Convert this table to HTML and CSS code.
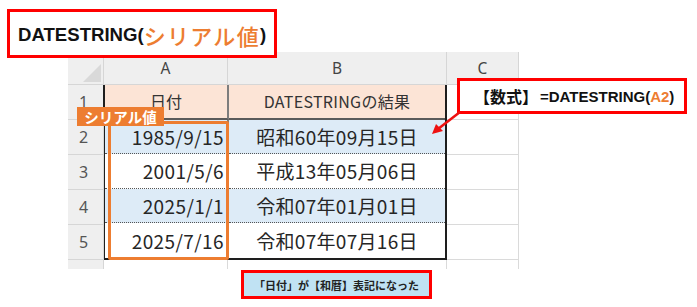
FILE: index.html
```html
<!DOCTYPE html>
<html lang="ja">
<head>
<meta charset="utf-8">
<link rel="stylesheet" href="styles.css">
</head>
<body>
<div class="page">
  <div class="sheet">
    <div class="hdr corner"><svg width="24" height="24" viewBox="0 0 24 24"><polygon points="22,4 22,22 4,22" fill="#d9d9d9"/></svg></div>
    <div class="hdr col">A</div>
    <div class="hdr col">B</div>
    <div class="hdr col">C</div>

    <div class="rh">1</div>
    <div class="table">
      <div class="c a r1">日付</div>
      <div class="c b r1">DATESTRINGの結果</div>
      <div class="c a num blue dot">1985/9/15</div>
      <div class="c b blue dot">昭和60年09月15日</div>
      <div class="c a num dot">2001/5/6</div>
      <div class="c b dot">平成13年05月06日</div>
      <div class="c a num blue dot">2025/1/1</div>
      <div class="c b blue dot">令和07年01月01日</div>
      <div class="c a num">2025/7/16</div>
      <div class="c b">令和07年07月16日</div>
    </div>
    <div class="cc"></div>
    <div class="rh">2</div>
    <div class="cc"></div>
    <div class="rh">3</div>
    <div class="cc"></div>
    <div class="rh">4</div>
    <div class="cc"></div>
    <div class="rh">5</div>
    <div class="cc"></div>

    <div class="rh tail"></div>
    <div class="cc tail"></div>
    <div class="cc tail"></div>
    <div class="cc tail"></div>
  </div>

  <div class="title"><span class="lat">DATESTRING(</span><span class="jp orange">シリアル値</span><span class="lat">)</span></div>
  <div class="serial-box"></div>
  <div class="serial-label">シリアル値</div>
  <div class="formula"><span class="jpf">【数式】</span><span class="latf">=DATESTRING(<span class="orange">A2</span>)</span></div>
  <svg class="arrow" width="697" height="307" viewBox="0 0 697 307">
    <line x1="460" y1="112" x2="438" y2="129" stroke="#ee1111" stroke-width="2.5"/>
    <polygon points="432,134 436,124 443,131" fill="#ee1111"/>
  </svg>
  <div class="note">「日付」が【和暦】表記になった</div>
</div>
</body>
</html>
```

FILE: styles.css
```css
* { box-sizing: border-box; }
html, body { margin: 0; padding: 0; background: #fff; }
.page {
  position: relative;
  width: 697px;
  height: 307px;
  overflow: hidden;
  padding: 52px 0 0 68px;
}
.sheet {
  display: grid;
  grid-template-columns: 36px 124px 219px 72px;
  grid-template-rows: 33px 35px 35px 35px 35px 35px 9px;
  width: 451px;
  font-family: "Noto Sans CJK JP", "Noto Sans", sans-serif;
  color: #222;
}
.hdr {
  background: #efefef;
  border-right: 1px solid #d6d6d6;
  border-bottom: 1px solid #d6d6d6;
  display: flex;
  align-items: center;
  justify-content: center;
  font-family: "Noto Sans", sans-serif;
  font-size: 15.5px;
  color: #444;
}
.corner { align-items: flex-end; justify-content: flex-end; }
.corner svg { display: block; }
.rh {
  background: #efefef;
  border-right: 1px solid #d6d6d6;
  border-bottom: 1px solid #d6d6d6;
  display: flex;
  align-items: center;
  justify-content: center;
  font-family: "Noto Sans", sans-serif;
  font-size: 16px;
  color: #555;
  padding-right: 4px;
}
.cc {
  border-right: 1px solid #dadada;
  border-bottom: 1px solid #dadada;
}
.tail { border-bottom: none; }
.table {
  grid-column: 2 / 4;
  grid-row: 2 / 7;
  display: grid;
  grid-template-columns: 124px 1fr;
  grid-template-rows: repeat(5, 1fr);
  border-left: 2px solid #1e1e1e;
  border-right: 2px solid #1e1e1e;
  border-bottom: 2px solid #1e1e1e;
  margin-left: -1px;
}
.c {
  display: flex;
  align-items: center;
  justify-content: center;
  font-size: 19px;
  color: #262626;
  white-space: nowrap;
}
.c.a { border-right: 2px solid #7d7d7d; }
.c.num { justify-content: flex-end; padding-right: 3px; letter-spacing: 0.4px; }
.c.r1 {
  background: #fce4d6;
  font-size: 16px;
  border-bottom: 2px solid #5a5a5a;
  color: #333;
}
.c.blue { background: #ddebf7; }
.c.dot { border-bottom: 1px dotted #555; }
.c.b { letter-spacing: 0.3px; }

.title {
  position: absolute;
  left: 7px;
  top: 9px;
  width: 270px;
  height: 49px;
  border: 3px solid #ff0000;
  background: #fff;
  display: flex;
  align-items: center;
  padding-left: 8px;
  padding-top: 2px;
}
.lat {
  font-family: "Liberation Sans", Arial, sans-serif;
  font-weight: bold;
  font-size: 18.6px;
  color: #111;
}
.jp {
  font-family: "Noto Sans CJK JP", sans-serif;
  font-weight: 500;
  font-size: 22px;
  letter-spacing: 1.3px;
}
.orange { color: #ed7d31; }
.serial-box {
  position: absolute;
  left: 108px;
  top: 121px;
  width: 121px;
  height: 139px;
  border: 3px solid #ed7d31;
  border-radius: 2px;
}
.serial-label {
  position: absolute;
  left: 77px;
  top: 107px;
  width: 87px;
  height: 19px;
  background: #ed7d31;
  color: #fff;
  font-family: "Noto Sans CJK JP", sans-serif;
  font-weight: bold;
  font-size: 14.5px;
  display: flex;
  align-items: center;
  justify-content: center;
}
.formula {
  position: absolute;
  left: 457px;
  top: 78px;
  width: 230px;
  height: 36px;
  border: 3px solid #ff0000;
  background: #fff;
  display: flex;
  align-items: center;
  padding-left: 14px;
  color: #111;
}
.jpf {
  font-family: "Noto Sans CJK JP", sans-serif;
  font-weight: bold;
  font-size: 16px;
}
.latf {
  font-family: "Liberation Sans", Arial, sans-serif;
  font-weight: bold;
  font-size: 15px;
  margin-left: 2px;
}
.arrow {
  position: absolute;
  left: 0;
  top: 0;
  pointer-events: none;
}
.note {
  position: absolute;
  left: 241px;
  top: 270px;
  width: 191px;
  height: 29px;
  border: 3px solid #ff0000;
  background: #c0e2f3;
  display: flex;
  align-items: center;
  justify-content: center;
  font-family: "Noto Sans CJK JP", sans-serif;
  font-weight: bold;
  font-size: 11px;
  color: #222;
}
```
